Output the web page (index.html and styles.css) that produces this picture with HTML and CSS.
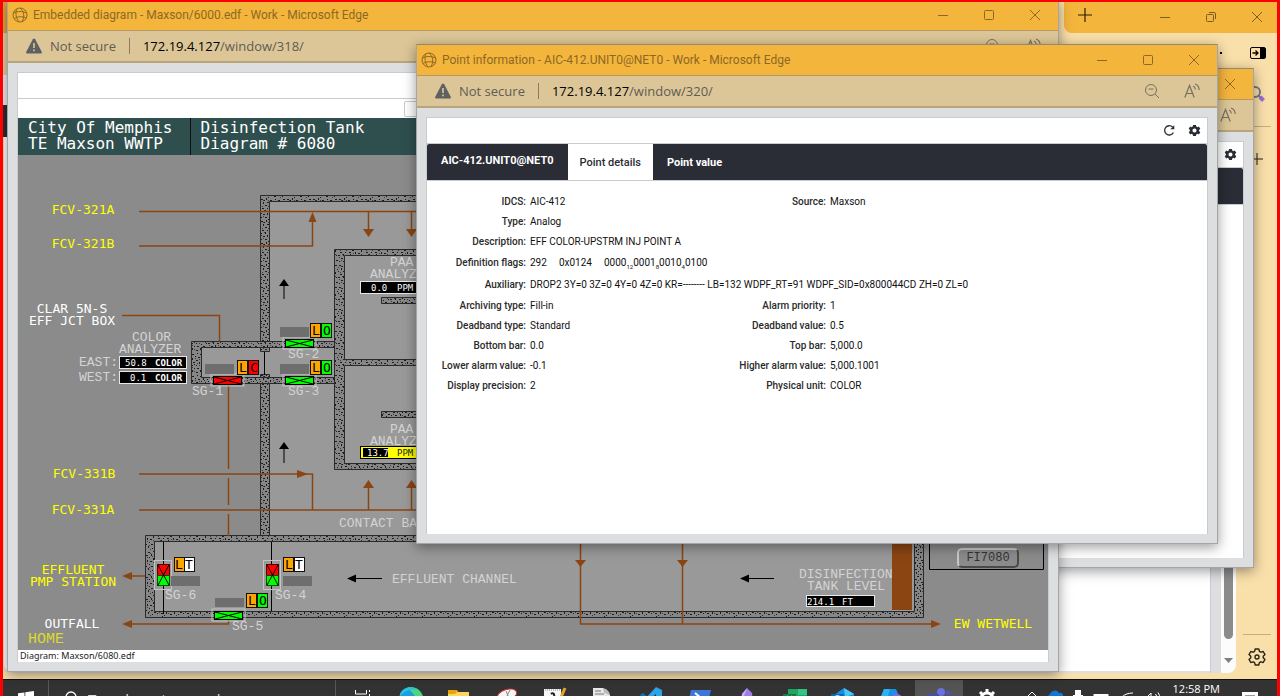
FILE: index.html
```html
<!DOCTYPE html>
<html lang="en">
<head>
  <meta charset="UTF-8">
  <meta name="viewport" content="width=device-width, initial-scale=1.0">
  <title>Point information - AIC-412.UNIT0@NET0</title>
  <link rel="stylesheet" href="styles.css">
</head>
<body>

<!-- shared icons -->
<svg class="sprite" aria-hidden="true">
  <symbol id="i-globe" viewBox="0 0 16 16">
    <g fill="none" stroke="currentColor" stroke-width="1">
      <circle cx="8" cy="8" r="7"/>
      <path d="M5 1.800C3 6 4 11 7 15M8 1c4 3 5 9 2 13.500M1.500 6c4-2 9-2 13 0M2 11.500c4-2.500 9-2 12.500-.5"/>
    </g>
  </symbol>
  <symbol id="i-min" viewBox="0 0 12 12"><path d="M1 6.500h10" fill="none" stroke="currentColor"/></symbol>
  <symbol id="i-max" viewBox="0 0 12 12"><rect x="1.500" y="1.500" width="9" height="9" rx="1" fill="none" stroke="currentColor"/></symbol>
  <symbol id="i-restore" viewBox="0 0 12 12"><path d="M1.500 4.500a1 1 0 0 1 1-1h5a1 1 0 0 1 1 1v5a1 1 0 0 1-1 1h-5a1 1 0 0 1-1-1zM4 1.500h5a1.500 1.500 0 0 1 1.500 1.500v5" fill="none" stroke="currentColor"/></symbol>
  <symbol id="i-close" viewBox="0 0 12 12"><path d="M1 1l10 10M11 1L1 11" fill="none" stroke="currentColor"/></symbol>
  <symbol id="i-warn" viewBox="0 0 16 16"><path d="M8 .5c.6 0 .9.300 1.200.8l6.500 12.500c.4.900 0 1.700-1 1.700H1.300c-1 0-1.400-.8-1-1.700L6.800 1.300C7.100.8 7.400.5 8 .5z" fill="#5f6062"/><path d="M8 5v5M8 11.500v1.800" stroke="#dcc697" stroke-width="1.600"/></symbol>
  <symbol id="i-zoom" viewBox="0 0 16 16"><g fill="none" stroke="currentColor"><circle cx="7" cy="7" r="5.500"/><path d="M4.500 6h5M11 11l4 4"/></g></symbol>
  <symbol id="i-read" viewBox="0 0 16 16"><g fill="none" stroke="currentColor" stroke-width="1.200"><path d="M.8 14.500L5.500 2.500l4.700 12M2.500 10.500h6M9 3c1.300.5 2.200 1.700 2.400 3.500M11 1c2.500.8 4 2.800 4.200 6"/></g></symbol>
  <symbol id="i-refresh" viewBox="0 0 14 14"><path d="M11.200 9.200A5 5 0 1 1 10.300 3.300" fill="none" stroke="#2b2d36" stroke-width="1.400"/><path d="M7.800 5.600h4.400V1.400z" fill="#2b2d36"/></symbol>
  <symbol id="i-gear" viewBox="0 0 14 14"><path fill="#2b2d36" fill-rule="evenodd" d="M5.500 1h3l.4 1.800 1.200.6 1.600-.7 1.500 2.500-1.300 1.200v1.200l1.300 1.200-1.500 2.500-1.600-.7-1.200.6-.4 1.800h-3l-.4-1.800-1.200-.6-1.600.7L.8 8.800l1.300-1.200V6.400L.8 5.200l1.500-2.500 1.600.7 1.200-.6zM7 4.800a2.200 2.200 0 1 0 0 4.400 2.200 2.200 0 0 0 0-4.400z"/></symbol>
  <symbol id="i-plus" viewBox="0 0 14 14"><path d="M7 0v14M0 7h14" fill="none" stroke="#2a2010" stroke-width="1.200"/></symbol>
</svg>

<div class="desktop">
  <div class="workspace">

    <!-- maximised browser behind everything -->
    <div class="browser">
      <div class="browser-left"></div>
      <div class="browser-tabs">
        <button class="new-tab" aria-label="New tab"><svg width="14" height="14"><use href="#i-plus"/></svg></button>
        <div class="controls">
          <button aria-label="Minimize"><svg width="12" height="12"><use href="#i-min"/></svg></button>
          <button aria-label="Restore"><svg width="12" height="12"><use href="#i-restore"/></svg></button>
          <button aria-label="Close"><svg width="12" height="12"><use href="#i-close"/></svg></button>
        </div>
      </div>
      <div class="browser-bar">
        <button aria-label="More"><svg width="14" height="4"><path d="M0 1h2v2H0zM6 1h2v2H6zM12 1h2v2h-2z"/></svg></button>
        <button aria-label="Sidebar"><svg width="16" height="12" viewBox="0 0 16 12"><rect x=".5" y=".5" width="15" height="11" rx="1.500" fill="#f9dfaa" stroke="#000"/><path d="M10 1h5v10h-5z"/><path d="M2.500 6h5M5.500 3.500L8 6 5.500 8.500" fill="none" stroke="#000" stroke-width="1.300"/></svg></button>
      </div>
      <div class="browser-main">
        <div class="browser-page"></div>
        <div class="page-gutter"></div>
        <div class="scrollbar"><div class="thumb"></div><svg width="9" height="5"><path d="M0 0h9L4.500 5z" fill="#808080"/></svg></div>
        <div class="sidebar">
          <button aria-label="Search"><svg width="18" height="18" viewBox="0 0 18 18"><circle cx="7" cy="7" r="5" fill="none" stroke="#7a7880" stroke-width="2"/><path d="M10.500 10.500l2 2" stroke="#7a7880" stroke-width="2"/><path d="M12 12l3.500 3.500" stroke="#9a6bd6" stroke-width="4"/></svg></button>
          <hr>
          <button aria-label="Add"><svg width="12" height="12" viewBox="0 0 14 14"><use href="#i-plus"/></svg></button>
          <span class="grow"></span>
          <hr>
          <button aria-label="Settings"><svg width="18" height="18" viewBox="0 0 18 18"><path d="M7.200 1h3.600l.6 2.400 1.400.8 2.400-.7L17 6.600l-1.800 1.700v1.400l1.800 1.700-1.800 3.100-2.400-.7-1.400.8-.6 2.400H7.200l-.6-2.400-1.400-.8-2.400.7L1 11.400l1.800-1.700V8.300L1 6.600l1.800-3.100 2.400.7 1.400-.8z" fill="none" stroke="#2a2418" stroke-width="1.400" stroke-linejoin="round"/><circle cx="9" cy="9" r="2" fill="none" stroke="#2a2418" stroke-width="1.400"/></svg></button>
        </div>
      </div>
    </div>

    <!-- partly covered popup -->
    <section class="window window-back">
      <header class="titlebar">
        <div class="controls"><button aria-label="Close"><svg width="12" height="12"><use href="#i-close"/></svg></button></div>
      </header>
      <div class="address">
        <button aria-label="Read aloud"><svg width="16" height="16"><use href="#i-read"/></svg></button>
      </div>
      <div class="content">
        <div class="toolbar"><button aria-label="Options"><svg width="13" height="13"><use href="#i-gear"/></svg></button></div>
        <nav class="tabs"></nav>
      </div>
    </section>

    <!-- diagram window -->
    <section class="window window-diagram">
      <header class="titlebar">
        <svg width="16" height="16"><use href="#i-globe"/></svg>
        <span class="title">Embedded diagram - Maxson/6000.edf - Work - Microsoft Edge</span>
        <div class="controls">
          <button aria-label="Minimize"><svg width="12" height="12"><use href="#i-min"/></svg></button>
          <button aria-label="Maximize"><svg width="12" height="12"><use href="#i-max"/></svg></button>
          <button aria-label="Close"><svg width="12" height="12"><use href="#i-close"/></svg></button>
        </div>
      </header>
      <div class="address">
        <svg width="16" height="16"><use href="#i-warn"/></svg>
        <span class="insecure">Not secure</span>
        <span class="url"><b>172.19.4.127</b>/window/318/</span>
        <button aria-label="Zoom"><svg width="16" height="16"><use href="#i-zoom"/></svg></button>
        <button aria-label="Read aloud"><svg width="16" height="16"><use href="#i-read"/></svg></button>
      </div>
      <div class="content">
        <div class="toolbar"></div>
        <div class="subbar"><button aria-label="Back"><svg width="8" height="8"><path d="M6 0L1 4l5 4z" fill="#555"/></svg></button></div>
        <div class="diagram-head">
          <div>City Of Memphis<br>TE Maxson WWTP</div>
          <div>Disinfection Tank<br>Diagram # 6080</div>
        </div>
        <div class="diagram">
          <svg viewBox="18 155 1030 495">
            <defs>
              <pattern id="stone" width="26" height="22" patternUnits="userSpaceOnUse">
                <rect width="26" height="22" fill="#868686"/>
                <path fill="#1c1c1c" d="M1 1h2v1H1zM6 0h1v2H6zM10 2h2v1h-2zM15 1h1v1h-1zM18 2h2v1h-2zM23 1h2v1h-2zM3 4h1v2H3zM7 4h2v1H7zM13 4h1v1h-1zM16 5h2v1h-2zM21 4h1v2h-1zM25 5h1v1h-1zM0 7h1v1H0zM5 7h2v1H5zM10 6h1v2h-1zM14 8h2v1h-2zM19 7h1v1h-1zM23 8h1v2h-1zM2 10h2v1H2zM7 10h1v1H7zM11 10h2v1h-2zM17 10h1v2h-1zM20 11h2v1h-2zM0 13h2v1H0zM5 12h1v2H5zM9 13h2v1H9zM14 13h1v1h-1zM19 14h1v1h-1zM24 13h1v1h-1zM3 16h2v1H3zM7 15h1v2H7zM12 16h1v1h-1zM15 16h2v1h-2zM21 16h2v1h-2zM1 19h1v1H1zM5 19h2v1H5zM10 18h1v2h-1zM14 20h2v1h-2zM18 18h1v2h-1zM22 20h1v1h-1zM24 18h2v1h-2zM8 21h1v1H8zM4 2h1v1H4zM12 12h1v1h-1z"/>
                <path fill="#3c3c3c" d="M3 2h1v1H3zM8 2h1v1H8zM13 6h1v1h-1zM20 3h1v1h-1zM2 8h1v1H2zM8 8h1v1H8zM17 7h1v1h-1zM22 6h1v1h-1zM4 12h1v1H4zM15 11h1v1h-1zM23 12h1v1h-1zM1 15h1v1H1zM10 15h1v1h-1zM17 13h1v1h-1zM9 17h1v1H9zM19 17h1v1h-1zM3 18h1v1H3zM12 19h1v1h-1zM20 21h1v1h-1zM0 3h1v1H0z"/>
              </pattern>
              <g id="gate">
                <rect x="-2" y="-2" width="33" height="12" class="frame"/>
                <rect x="0.500" y="0.500" width="28" height="8" stroke="#000"/>
                <path d="M1 1l27 7M28 1L1 8" class="thin"/>
              </g>
              <g id="vgate">
                <rect x="-2.500" y="-3.500" width="17" height="29" class="frame"/>
                <rect x=".5" y=".5" width="12" height="11" fill="#f00" stroke="#500"/>
                <rect x=".5" y="11.500" width="12" height="10" fill="#0f0" stroke="#050"/>
                <path d="M1 1l5.500 10L12 1M1 21l5.500-10L12 21" class="thin"/>
              </g>
            </defs>

            <!-- tank areas -->
            <path class="area" d="M265 198h655v340H265zM196 344h70v36h-70zM150 538h769v76H150z"/>
            <!-- walls -->
            <path class="wall" d="M260.500 351.500v-156H925v6H269.500v150zM260.500 374.500h9v163h-9z"/>
            <path class="wall" fill-rule="evenodd" d="M334.500 383.500h-143v-42h143v6h-133v30h133z"/>
            <path class="wall" d="M334.500 249.500H900v6H344.500v104H900v6H344.500v98H900v6H334.500z"/>
            <path class="wall" d="M381.500 297.500h100v6h-100zM381.500 411.500h100v6h-100z"/>
            <path class="wall" fill-rule="evenodd" d="M145.500 535.500h778v82h-778zM154.500 541.500v70h760v-70z"/>
            <path class="thin" d="M264.500 352v23M163.500 542v72M271.500 542v69"/>
            <rect x="892" y="535" width="20" height="75" fill="#8b4513"/>

            <!-- piping -->
            <path class="pipe" d="M139 211.500h300M139 246h173.500v-30M368.500 211v20M411.500 211v20M122 315.500h97.500v26M228.500 385v84M228.500 478v27M228.500 514v22M139 474h173.500v36M139 510h300M368.500 510v-24M411.500 510v-24M145 576h-14M131 624h97.500v-5M580.500 540v84M682.500 540v84M580 624h352"/>
            <path fill="#8b4513" d="M312.500 212l4 10h-8zM363 229h11l-5.500 8zM406 229h11l-5.500 8zM297 470l11 4-11 4zM363 488h11l-5.500-8zM406 488h11l-5.500-8zM132 572v8l-10-4zM132 620v8l-10-4zM575 560h11l-5.500 7zM677 560h11l-5.500 7zM931 620l10 4-10 4z"/>
            <path class="thin" d="M284 286v13M284 449v14M356 578.500h26M748 578.500h26"/>
            <path d="M279 286l5-7 5 7zM279 449l5-7 5 7zM347 578.500l9-4v8zM740 578.500l9-4v8z"/>

            <!-- gates -->
            <use href="#gate" x="285" y="339" fill="#0f0"/>
            <use href="#gate" x="285" y="376" fill="#0f0"/>
            <use href="#gate" x="213" y="376" fill="#f00"/>
            <use href="#gate" x="214" y="611" fill="#0f0"/>
            <use href="#vgate" x="157" y="564"/>
            <use href="#vgate" x="266" y="564"/>
            <path fill="#6e6e6e" d="M280 327h29v10h-29zM280 364h29v10h-29zM205 364h29v10h-29zM171 576h29v10h-29zM283 576h29v10h-29zM215 598h29v9h-29z"/>
            <g class="flags">
              <rect x="310.500" y="323.500" width="10" height="14" fill="#ffa500"/><rect x="321.500" y="323.500" width="10" height="14" fill="#0f0"/>
              <rect x="310.500" y="360.500" width="10" height="14" fill="#ffa500"/><rect x="321.500" y="360.500" width="10" height="14" fill="#0f0"/>
              <rect x="237.500" y="360.500" width="10" height="14" fill="#ffa500"/><rect x="248.500" y="360.500" width="10" height="14" fill="#f00"/>
              <rect x="174.500" y="557.500" width="10" height="14" fill="#ffa500"/><rect x="184.500" y="557.500" width="10" height="14" fill="#fff"/>
              <rect x="283.500" y="557.500" width="10" height="14" fill="#ffa500"/><rect x="294.500" y="557.500" width="10" height="14" fill="#fff"/>
              <rect x="246.500" y="593.500" width="10" height="14" fill="#ffa500"/><rect x="257.500" y="593.500" width="10" height="14" fill="#0f0"/>
              <g class="flag-text">
                <text x="316" y="335">L</text><text x="327" y="335">O</text>
                <text x="316" y="372">L</text><text x="327" y="372">O</text>
                <text x="243" y="372">L</text><text x="254" y="372">C</text>
                <text x="179" y="569">L</text><text x="189" y="569">T</text>
                <text x="289" y="569">L</text><text x="299" y="569">T</text>
                <text x="252" y="605">L</text><text x="263" y="605">O</text>
              </g>
            </g>

            <!-- readouts -->
            <g stroke="#e8e8e8">
              <rect x="119.500" y="356.500" width="67" height="12"/>
              <rect x="119.500" y="371.500" width="67" height="12"/>
              <rect x="360.500" y="281.500" width="67" height="12"/>
              <rect x="806.500" y="595.500" width="68" height="11"/>
            </g>
            <rect x="360.500" y="446.500" width="67" height="12" fill="#ff0" stroke="#000"/>
            <rect x="363" y="448" width="25" height="9"/>
            <g class="readout">
              <text x="125" y="366">50.8</text><text x="155" y="366" class="strong">COLOR</text>
              <text x="130" y="381">0.1</text><text x="155" y="381" class="strong">COLOR</text>
              <text x="371" y="291">0.0</text><text x="397" y="291">PPM</text>
              <text x="367" y="456">13.7</text><text x="397" y="456" class="dark">PPM</text>
              <text x="807" y="605">214.1</text><text x="842" y="605">FT</text>
            </g>

            <!-- labels -->
            <g class="tag yellow">
              <text x="83" y="214">FCV-321A</text>
              <text x="83" y="248">FCV-321B</text>
              <text x="84" y="478">FCV-331B</text>
              <text x="83" y="514">FCV-331A</text>
              <text x="73" y="574">EFFLUENT</text>
              <text x="73" y="586">PMP STATION</text>
              <text x="993" y="628">EW WETWELL</text>
            </g>
            <g class="tag white">
              <text x="72" y="313">CLAR 5N-S</text>
              <text x="72" y="325">EFF JCT BOX</text>
              <text x="72" y="628">OUTFALL</text>
            </g>
            <g class="note">
              <text x="132" y="341">COLOR</text>
              <text x="119" y="353">ANALYZER</text>
              <text x="79" y="366">EAST:</text>
              <text x="79" y="381">WEST:</text>
              <text x="390" y="266">PAA</text>
              <text x="370" y="278">ANALYZER</text>
              <text x="390" y="433">PAA</text>
              <text x="370" y="445">ANALYZER</text>
              <text x="288" y="358">SG-2</text>
              <text x="288" y="395">SG-3</text>
              <text x="192" y="395">SG-1</text>
              <text x="165" y="599">SG-6</text>
              <text x="275" y="599">SG-4</text>
              <text x="232" y="630">SG-5</text>
              <text x="339" y="527">CONTACT BASIN</text>
              <text x="392" y="583">EFFLUENT CHANNEL</text>
              <text x="799" y="578">DISINFECTION</text>
              <text x="807" y="590">TANK LEVEL</text>
            </g>
            <text x="28" y="643" class="home">HOME</text>
            <path class="thin" d="M929.500 500v69.500h114V500"/>
          </svg>
          <button class="key">FI7080</button>
        </div>
        <div class="status">Diagram: Maxson/6080.edf</div>
      </div>
    </section>

    <!-- point information window -->
    <section class="window window-point">
      <header class="titlebar">
        <svg width="16" height="16"><use href="#i-globe"/></svg>
        <span class="title">Point information - AIC-412.UNIT0@NET0 - Work - Microsoft Edge</span>
        <div class="controls">
          <button aria-label="Minimize"><svg width="12" height="12"><use href="#i-min"/></svg></button>
          <button aria-label="Maximize"><svg width="12" height="12"><use href="#i-max"/></svg></button>
          <button aria-label="Close"><svg width="12" height="12"><use href="#i-close"/></svg></button>
        </div>
      </header>
      <div class="address">
        <svg width="16" height="16"><use href="#i-warn"/></svg>
        <span class="insecure">Not secure</span>
        <span class="url"><b>172.19.4.127</b>/window/320/</span>
        <button aria-label="Zoom"><svg width="16" height="16"><use href="#i-zoom"/></svg></button>
        <button aria-label="Read aloud"><svg width="16" height="16"><use href="#i-read"/></svg></button>
      </div>
      <div class="content">
        <div class="toolbar">
          <button aria-label="Refresh"><svg width="13" height="13" viewBox="0 0 14 14"><use href="#i-refresh"/></svg></button>
          <button aria-label="Options"><svg width="13" height="13"><use href="#i-gear"/></svg></button>
        </div>
        <nav class="tabs">
          <strong class="point-name">AIC-412.UNIT0@NET0</strong>
          <button class="tab active">Point details</button>
          <button class="tab">Point value</button>
        </nav>
        <dl class="details">
          <dt>IDCS:</dt><dd>AIC-412</dd>
          <dt>Source:</dt><dd>Maxson</dd>
          <dt>Type:</dt><dd class="wide">Analog</dd>
          <dt>Description:</dt><dd class="wide">EFF COLOR-UPSTRM INJ POINT A</dd>
          <dt class="tall">Definition flags:</dt><dd class="wide tall flag-bits"><span>292</span><span>0x0124</span><span>0000<sub>12</sub>0001<sub>8</sub>0010<sub>4</sub>0100</span></dd>
          <dt class="tall">Auxiliary:</dt><dd class="wide tall">DROP2 3Y=0 3Z=0 4Y=0 4Z=0 KR=-------- LB=132 WDPF_RT=91 WDPF_SID=0x800044CD ZH=0 ZL=0</dd>
          <dt>Archiving type:</dt><dd>Fill-in</dd>
          <dt>Alarm priority:</dt><dd>1</dd>
          <dt>Deadband type:</dt><dd>Standard</dd>
          <dt>Deadband value:</dt><dd>0.5</dd>
          <dt>Bottom bar:</dt><dd>0.0</dd>
          <dt>Top bar:</dt><dd>5,000.0</dd>
          <dt>Lower alarm value:</dt><dd>-0.1</dd>
          <dt>Higher alarm value:</dt><dd>5,000.1001</dd>
          <dt>Display precision:</dt><dd>2</dd>
          <dt>Physical unit:</dt><dd>COLOR</dd>
        </dl>
      </div>
    </section>
  </div>

  <footer class="taskbar">
    <div class="taskbar-row">
      <button class="start" aria-label="Start"><svg width="16" height="16" viewBox="0 0 16 16"><path fill="#fff" d="M0 2.300L6.500 1.400v6.100H0zM7.300 1.300L16 0v7.500H7.300zM0 8.300h6.500v6.200L0 13.600zM7.300 8.300H16V16l-8.700-1.300z"/></svg></button>
      <label class="search">
        <svg width="16" height="16" viewBox="0 0 16 16"><circle cx="8" cy="6" r="5" fill="none" stroke="#fff" stroke-width="1.300"/><path d="M4.500 9.500L1 14" stroke="#fff" stroke-width="1.300"/></svg>
        <input type="text" placeholder="Type here to search" aria-label="Search">
      </label>
      <div class="apps">
        <button aria-label="Task view"><svg width="24" height="24" viewBox="0 0 24 24"><path d="M4.500 3v4h11V3M18.500 3v2M18.500 7v10M4.500 10h11v6h-11z" fill="none" stroke="#fff"/></svg></button>
        <button aria-label="Edge"><svg width="24" height="24" viewBox="0 0 24 24"><circle cx="12" cy="12" r="12" fill="#1b9de2"/><path d="M8 1C16-2 23 4 24 10c0 4-4 6-8 5 2-4 0-8-8-14z" fill="#4bd67c"/><path d="M1 7C4 0 13-2 18 3 9 2 6 4 1 9z" fill="#2fc2df"/></svg></button>
        <button aria-label="File Explorer"><svg width="24" height="24" viewBox="0 0 24 24"><path d="M1 3h9l2 3v4H1z" fill="#e5a50a"/><path d="M1 7h7l2-2h12v14H1z" fill="#ffd45e"/></svg></button>
        <button aria-label="Snipping Tool"><svg width="24" height="24" viewBox="0 0 24 24"><ellipse cx="12" cy="8" rx="10" ry="5.500" transform="rotate(-18 12 8)" fill="#f4f4f4" stroke="#c93030"/><path d="M11 4l3 7M15 3l-4 8" stroke="#888"/></svg></button>
        <button aria-label="Notepad++"><svg width="24" height="24" viewBox="0 0 24 24"><path d="M1 2h17v20H1z" fill="#f5f7f8"/><path d="M2 3h15" stroke="#888" stroke-dasharray="1 1"/><path d="M8 7c2-2 4 0 3 4" fill="none" stroke="#222" stroke-width="2"/><path d="M22 1l-6 14" stroke="#e2a62a" stroke-width="3"/></svg></button>
        <button aria-label="Documents"><svg width="24" height="24" viewBox="0 0 24 24"><path d="M2 1h10l7 7v15H2z" fill="#e8e8e8"/><path d="M12 1c4 1 6 3 7 7l-6-2z" fill="#bbb"/><path d="M4 4h6M4 7h9" stroke="#777"/></svg></button>
        <button aria-label="VS Code"><svg width="24" height="24" viewBox="0 0 24 24"><path d="M17 0l6 3v18l-6 3L6 12z" fill="#2aa3ea"/><path d="M1 8l3-2 14 12-1 6z" fill="#0b72b9"/><path d="M17 7v10l-6-5z" fill="#333"/></svg></button>
        <button aria-label="PowerShell"><svg width="24" height="24" viewBox="0 0 24 24"><path d="M4 3h20l-4 17H0z" fill="#3d76d8"/><path d="M8 6l6 5-7 6" fill="none" stroke="#fff" stroke-width="2"/></svg></button>
        <button aria-label="Obsidian"><svg width="24" height="24" viewBox="0 0 24 24"><path d="M12 1l5 5 1 10-6 7-6-7 1-9z" fill="#a27bea"/><path d="M12 1L9 9l3 14-6-7 1-9z" fill="#c8b2f5"/></svg></button>
        <button aria-label="Excel"><svg width="24" height="24" viewBox="0 0 24 24"><path d="M5 2h19v20H5z" fill="#21a366"/><path d="M15 2h9v6h-9z" fill="#33c481"/><path d="M0 7h13v12H0z" fill="#107c41"/><path d="M4 9l5 7M9 9l-5 7" stroke="#fff" stroke-width="1.500"/></svg></button>
        <button aria-label="Outlook"><svg width="24" height="24" viewBox="0 0 24 24"><path d="M3 8L13 1l10 6v14H3z" fill="#1490df"/><path d="M13 1l10 6-9 3z" fill="#50c4f5"/><path d="M0 7h13v12H0z" fill="#0a64b8"/><circle cx="6.500" cy="12" r="3" fill="none" stroke="#fff" stroke-width="1.500"/></svg></button>
        <button aria-label="Microsoft 365"><svg width="24" height="24" viewBox="0 0 24 24"><path d="M5 2h12l4 9H9l-5 9-3-8z" fill="#1a8fe8"/><path d="M5 2h6L8 12H1z" fill="#2bb5f0"/><circle cx="18" cy="13" r="6" fill="#9467dc"/></svg></button>
        <button class="running" aria-label="Teams"><svg width="24" height="24" viewBox="0 0 24 24"><circle cx="14" cy="5" r="4" fill="#6a70dc"/><circle cx="21" cy="6" r="2.500" fill="#4c54c0"/><path d="M9 9h14v12H9z" fill="#5b61cf"/><path d="M0 7h12v12H0z" fill="#454cb4"/><path d="M3 10h6M6 10v6" stroke="#fff" stroke-width="1.500"/></svg></button>
        <button aria-label="Settings"><svg width="20" height="20" viewBox="0 0 20 20"><circle cx="10" cy="10" r="6" fill="none" stroke="#fff" stroke-width="3"/><path d="M10 0v4M10 16v4M0 10h4M16 10h4M3 3l3 3M14 14l3 3M17 3l-3 3M6 14l-3 3" stroke="#fff" stroke-width="3"/></svg></button>
      </div>
      <div class="tray">
        <svg width="12" height="16"><path d="M1 6l5-5 5 5" fill="none" stroke="#fff"/></svg>
        <svg width="16" height="18"><path d="M3 11a4 4 0 0 1 0-7 5 5 0 0 1 9-1 4 4 0 0 1 2 8z" fill="#1177d1"/></svg>
        <svg width="12" height="22"><path d="M3 2h6v5h2v11H1V7h2z" fill="#fff"/></svg>
        <svg width="16" height="16"><path d="M1.500 4h13v7h-13z" fill="none" stroke="#fff" stroke-width="2"/></svg>
        <svg width="16" height="16"><path d="M1 14C1 7 6 2 15 2M5 14c0-4 4-7 10-7" fill="none" stroke="#fff"/></svg>
        <svg width="18" height="16"><path d="M1 6h3l4-4v12l-4-4H1zM10 5q2 3 0 6M12.500 3q3.500 5 0 10M15 1.500q4 6 0 13" fill="none" stroke="#fff"/></svg>
      </div>
      <time class="clock">12:58 PM</time>
      <button class="notes" aria-label="Notifications"><svg width="16" height="16"><path d="M0 1h16v12h-5l-3 3v-3H0z" fill="#fff"/><path d="M3 5h10M3 8h10" stroke="#333"/></svg></button>
    </div>
  </footer>
</div>

</body>
</html>
```
FILE: styles.css
```css
* {
  box-sizing: border-box;
}
body {
  margin: 0;
  font-family: "Open Sans", "Noto Sans", sans-serif;
}
button {
  display: flex;
  align-items: center;
  justify-content: center;
  padding: 0;
  border: 0;
  background: none;
  color: inherit;
  font: inherit;
}
svg {
  display: block;
  flex: none;
}
.sprite {
  position: absolute;
  width: 0;
  height: 0;
}

/* Desktop */
.desktop {
  position: relative;
  display: flex;
  flex-direction: column;
  height: 100vh;
  overflow: hidden;
  background: #f9dfaa;
}
.desktop::after {
  content: '';
  position: absolute;
  inset: 0;
  border: solid #f00;
  border-width: 2px 3px 0;
  pointer-events: none;
  z-index: 10;
}
.workspace {
  position: relative;
  flex: 1;
  min-height: 0;
}

/* Maximised browser */
.browser {
  position: relative;
  display: flex;
  flex-direction: column;
  height: 100%;
  padding: 2px 3px 6px;
}
.browser-left {
  position: absolute;
  top: 0;
  left: 3px;
  width: 20px;
  height: 137px;
  background: linear-gradient(#e2a338 33px, #e8cf9c 33px 75px, #eee 75px 105px, #2b2d36 105px);
}
.browser-tabs {
  display: flex;
  justify-content: space-between;
  align-self: flex-end;
  width: 213px;
  height: 31px;
  background: #f4b53d;
  border-bottom-left-radius: 8px;
  color: #7c5c1f;
}
.browser-tabs .controls {
  margin-right: -3px;
}
.new-tab {
  width: 42px;
  height: 26px;
}
.browser-bar {
  display: flex;
  justify-content: flex-end;
  align-items: center;
  gap: 28px;
  height: 40px;
  padding-right: 11px;
}
.browser-main {
  display: flex;
  flex: 1;
  min-height: 0;
}
.browser-page {
  flex: 1;
  margin-left: 1px;
  background: #fff;
  border-bottom: 2px solid #dcdee0;
  border-bottom-left-radius: 8px;
}
.page-gutter {
  width: 11px;
  background: #dcdee0;
  border-left: 1px solid #c9cccf;
}
.scrollbar {
  display: flex;
  flex-direction: column;
  align-items: center;
  gap: 19px;
  width: 15px;
  padding-bottom: 10px;
  background: #fcfcfc;
  border-bottom-right-radius: 8px;
}
.thumb {
  flex: 1;
  width: 9px;
  border-radius: 5px;
  background: #8b8b8b;
}
.sidebar {
  display: flex;
  flex-direction: column;
  align-items: center;
  gap: 23px;
  width: 41px;
  padding: 12px 0 7px;
}
.sidebar hr {
  width: 28px;
  margin: 0;
  border: 0;
  border-top: 1px solid #c3ae84;
}
.sidebar button {
  height: 18px;
}
.sidebar .grow {
  flex: 1;
}
.sidebar hr:last-of-type {
  margin-bottom: -10px;
}

/* Windows */
.window {
  position: absolute;
  display: flex;
  flex-direction: column;
  padding-bottom: 9px;
  border: 1px solid #94886f;
  border-color: #94886f #a4a5a8 #a4a5a8;
  background: #dcdee0;
  box-shadow: 0 3px 12px rgba(0, 0, 0, 0.4);
}
.window-back {
  top: 68px;
  left: 453px;
  width: 801px;
  height: 500px;
}
.window-diagram {
  top: -1px;
  left: 7px;
  width: 1052px;
  height: 673px;
}
.window-point {
  top: 44px;
  left: 416px;
  width: 802px;
  height: 500px;
}
.titlebar {
  display: flex;
  align-items: center;
  height: 31px;
  padding-left: 4px;
  background: #f4b53d;
  border-bottom: 1px solid #b79a63;
  color: #8d6822;
  font-family: Roboto, sans-serif;
  font-size: 12px;
}
.title {
  margin-left: 5px;
  white-space: nowrap;
}
.controls {
  display: flex;
  margin-left: auto;
}
.controls button {
  width: 46px;
  height: 30px;
}
.address {
  display: flex;
  align-items: center;
  height: 32px;
  padding: 0 5px 0 18px;
  background: #dcc697;
  border-bottom: 2px solid #b8a57d;
  color: #5f5c55;
  font-size: 13px;
}
.insecure {
  margin-left: 8px;
  padding-right: 13px;
  border-right: 1px solid #8a7c60;
  line-height: 16px;
}
.url {
  flex: 1;
  margin-left: 13px;
}
.url b {
  font-weight: 400;
  color: #000;
}
.address button {
  width: 40px;
  height: 30px;
  margin-left: auto;
  color: #77705f;
}
.content {
  display: flex;
  flex-direction: column;
  flex: 1;
  min-height: 0;
  margin: 9px 9px 0;
  background: #fff;
  border: 1px solid #c9cccf;
  border-bottom: 0;
  font-family: Roboto, sans-serif;
}
.toolbar {
  display: flex;
  justify-content: flex-end;
  align-items: center;
  gap: 12px;
  height: 26px;
  padding-right: 6px;
  border-bottom: 1px solid #c9cccf;
}
.tabs {
  display: flex;
  height: 37px;
  background: #2b2d36;
  border-bottom: 1px solid #c9cccf;
  border-radius: 2px 2px 0 0;
  color: #fff;
  font-size: 11px;
}
.point-name {
  padding: 0 14px;
  line-height: 34px;
}
.tab {
  padding: 0 14px;
  font-weight: 700;
}
.tab.active {
  padding: 0 12px;
  background: #fff;
  color: #2b2d36;
  font-weight: 500;
}

/* Point details */
.details {
  display: grid;
  grid-template-columns: 99px 180px 112px 1fr;
  column-gap: 4px;
  margin: 0;
  padding: 11px 0 0;
  color: #2b2b2b;
  font-size: 10px;
  font-weight: 500;
  line-height: 20px;
}
.details dt {
  text-align: right;
}
.details dd {
  margin: 0;
  color: #111;
  font-weight: 400;
  white-space: nowrap;
}
.details .wide {
  grid-column: 2 / -1;
}
.details .tall {
  line-height: 22px;
}
.flag-bits {
  display: flex;
  gap: 12px;
}
.flag-bits sub {
  font-size: 6px;
  line-height: 0;
}

/* Diagram */
.subbar {
  display: flex;
  justify-content: flex-end;
  align-items: center;
  height: 19px;
}
.subbar button {
  width: 60px;
  height: 16px;
  margin-right: 584px;
  padding-left: 10px;
  justify-content: flex-start;
  border: 1px solid #c9cccf;
  border-radius: 2px;
}
.diagram-head {
  display: flex;
  height: 37px;
  background: #2f4f4f;
  color: #fff;
  font-family: "DejaVu Sans Mono", monospace;
  font-size: 16px;
  line-height: 16px;
}
.diagram-head div {
  padding: 2px 17px 0 10px;
  border-right: 1px solid #111;
}
.diagram-head div:last-child {
  border-right: 0;
}
.diagram {
  position: relative;
  background: #8b8b8b;
}
.diagram > svg {
  width: 100%;
  height: auto;
}
.area {
  fill: #999;
}
.wall {
  fill: url(#stone);
  stroke: #2a2a2a;
}
.pipe {
  fill: none;
  stroke: #8b4513;
  stroke-width: 1.5;
}
.thin {
  fill: none;
  stroke: #000;
}
.frame {
  fill: none;
  stroke: #c4c4c4;
}
.flags rect {
  stroke: #111;
}
.flag-text {
  font: 13px "DejaVu Sans Mono", monospace;
  text-anchor: middle;
}
.readout {
  fill: #fff;
  font: 9px "DejaVu Sans Mono", monospace;
}
.readout .strong {
  font-weight: 700;
}
.readout .dark {
  fill: #222;
}
.tag {
  font: 13px "DejaVu Sans Mono", monospace;
  text-anchor: middle;
}
.yellow {
  fill: #ff0;
}
.white {
  fill: #fff;
}
.note {
  fill: #d3d3d3;
  font: 13px "Liberation Mono", monospace;
}
.home {
  fill: #dada2a;
  font: 15px "Liberation Mono", monospace;
}
.key {
  position: absolute;
  right: 29px;
  bottom: 82px;
  width: 62px;
  height: 20px;
  border: 2px solid;
  border-color: #c8c8c8 #4a4a4a #4a4a4a #c8c8c8;
  border-radius: 5px;
  color: #333;
  font: 12px "Liberation Mono", monospace;
}
.status {
  padding-left: 2px;
  color: #222;
  font-family: "Noto Sans", sans-serif;
  font-size: 9px;
  line-height: 12px;
}

/* Taskbar */
.taskbar {
  flex: 0 0 17px;
  overflow: hidden;
  background: #333;
  border-top: 1px solid #111;
}
.taskbar-row {
  display: flex;
  align-items: center;
  height: 38px;
  padding-left: 3px;
  color: #fff;
}
.start {
  flex: none;
  width: 46px;
  height: 38px;
  border-right: 1px solid #5a5a5a;
}
.search {
  display: flex;
  flex: none;
  align-items: center;
  gap: 7px;
  width: 287px;
  height: 38px;
  padding-left: 14px;
  border-right: 1px solid #5a5a5a;
}
.search input {
  flex: 1;
  min-width: 0;
  border: 0;
  background: none;
  color: #fff;
  font: 15px "Open Sans", sans-serif;
}
.search input::placeholder {
  color: #ddd;
}
.apps {
  display: flex;
  flex: none;
  padding-left: 3px;
}
.apps button {
  width: 48px;
  height: 38px;
}
.apps .running {
  background: #555;
}
.tray {
  display: flex;
  align-items: center;
  gap: 9px;
  margin-left: auto;
}
.clock {
  height: 38px;
  margin-left: 12px;
  font-size: 11px;
  line-height: 18px;
  white-space: nowrap;
}
.notes {
  width: 60px;
  height: 38px;
}
```
